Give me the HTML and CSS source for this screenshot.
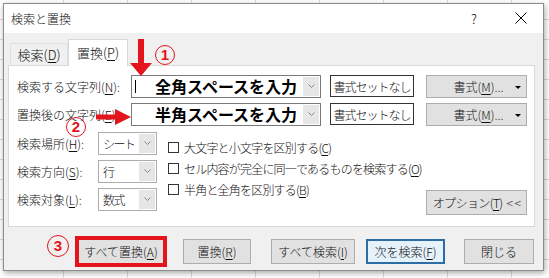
FILE: index.html
```html
<!DOCTYPE html>
<html lang="ja">
<head>
    <meta charset="UTF-8">
    <title>検索と置換</title>
    <link rel="stylesheet" href="styles.css">
</head>
<body>
    <div class="dialog">
        <!-- Title bar -->
        <div class="titlebar">
            <span class="title">検索と置換</span>
            <span class="help">?</span>
            <span class="close">
                <svg width="12" height="12" viewBox="0 0 12 12"><path d="M0.5 0.5L11.5 11.5M11.5 0.5L0.5 11.5" stroke="#000" stroke-width="1"/></svg>
            </span>
        </div>

        <!-- Tabs -->
        <div class="tabs">
            <div class="tab">検索(<u>D</u>)</div>
            <div class="tab active">置換(<u>P</u>)</div>
        </div>

        <div class="panel">
            <div class="text-row">
                <label class="row-label">検索する文字列(<u>N</u>):</label>
                <div class="combo">
                    <span class="caret"></span>
                    <span class="combo-value">全角スペースを入力</span>
                    <span class="combo-drop"><svg width="7" height="4" viewBox="0 0 7 4"><path d="M0.5 0.5L3.5 3.5L6.5 0.5" stroke="#888" fill="none"/></svg></span>
                </div>
                <div class="format-none">書式セットなし</div>
                <div class="btn format-btn">書式(<u>M</u>)... <span class="tri"></span></div>
            </div>
            <div class="text-row">
                <label class="row-label">置換後の文字列(<u>E</u>):</label>
                <div class="combo">
                    <span class="combo-value">半角スペースを入力</span>
                    <span class="combo-drop"><svg width="7" height="4" viewBox="0 0 7 4"><path d="M0.5 0.5L3.5 3.5L6.5 0.5" stroke="#888" fill="none"/></svg></span>
                </div>
                <div class="format-none">書式セットなし</div>
                <div class="btn format-btn">書式(<u>M</u>)... <span class="tri"></span></div>
            </div>

            <div class="options">
                <div class="selects">
                    <div class="select-row">
                        <label class="sel-label">検索場所(<u>H</u>):</label>
                        <div class="select"><span class="sel-value">シート</span><span class="select-drop"><svg width="7" height="4" viewBox="0 0 7 4"><path d="M0.5 0.5L3.5 3.5L6.5 0.5" stroke="#888" fill="none"/></svg></span></div>
                    </div>
                    <div class="select-row">
                        <label class="sel-label">検索方向(<u>S</u>):</label>
                        <div class="select"><span class="sel-value">行</span><span class="select-drop"><svg width="7" height="4" viewBox="0 0 7 4"><path d="M0.5 0.5L3.5 3.5L6.5 0.5" stroke="#888" fill="none"/></svg></span></div>
                    </div>
                    <div class="select-row">
                        <label class="sel-label">検索対象(<u>L</u>):</label>
                        <div class="select"><span class="sel-value">数式</span><span class="select-drop"><svg width="7" height="4" viewBox="0 0 7 4"><path d="M0.5 0.5L3.5 3.5L6.5 0.5" stroke="#888" fill="none"/></svg></span></div>
                    </div>
                </div>
                <div class="checks">
                    <div class="check"><span class="box"></span>大文字と小文字を区別する(<u>C</u>)</div>
                    <div class="check"><span class="box"></span>セル内容が完全に同一であるものを検索する(<u>O</u>)</div>
                    <div class="check"><span class="box"></span>半角と全角を区別する(<u>B</u>)</div>
                </div>
                <div class="btn options-btn">オプション(<u>T</u>)&nbsp; &lt; &lt;</div>
            </div>
        </div>

        <!-- Bottom buttons -->
        <div class="buttons">
            <div class="btn b-replace-all">すべて置換(<u>A</u>)</div>
            <div class="btn b-replace">置換(<u>R</u>)</div>
            <div class="btn b-find-all">すべて検索(<u>I</u>)</div>
            <div class="btn b-find-next">次を検索(<u>F</u>)</div>
            <div class="btn b-close">閉じる</div>
        </div>
    </div>

    <!-- Annotations -->
    <svg class="arrow arrow-down" width="24" height="38" viewBox="0 0 24 38">
        <path d="M9 0H15V24H23L12 37L1 24H9Z" fill="#e3141c"/>
    </svg>
    <svg class="arrow arrow-right" width="36" height="18" viewBox="0 0 36 18">
        <path d="M0 6.5H19V1L35 9L19 17V11.5H0Z" fill="#e3141c"/>
    </svg>
    <span class="num num-1">1</span>
    <span class="num num-2">2</span>
    <span class="num num-3">3</span>
</body>
</html>
```

FILE: styles.css
```css
body {
    margin: 0;
    width: 549px;
    height: 278px;
    overflow: hidden;
    position: relative;
    font-family: 'Noto Sans CJK JP', 'Noto Sans', sans-serif;
    font-size: 12px;
    font-weight: 300;
    white-space: nowrap;
    color: #111;
    background-color: #fff;
    background-image:
        repeating-linear-gradient(to right, transparent 0, transparent 63px, #dadada 63px, #dadada 64px),
        repeating-linear-gradient(to bottom, transparent 0, transparent 19px, #dadada 19px, #dadada 20px);
    padding: 3px 0 0 3px;
    box-sizing: border-box;
}

u {
    text-decoration-thickness: 1px;
    text-underline-offset: 2px;
}

.dialog {
    width: 541px;
    height: 268px;
    box-sizing: border-box;
    border: 1px solid #8c8c8c;
    background: #f0f0f0;
    box-shadow: 1px 2px 6px rgba(0, 0, 0, 0.35);
    display: flex;
    flex-direction: column;
}

.titlebar {
    height: 29px;
    background: #fff;
    display: flex;
    align-items: center;
    padding-left: 7px;
}

.title {
    flex: 1;
}

.help {
    width: 12px;
    text-align: center;
    font-size: 13px;
    margin-right: 35px;
}

.close {
    display: flex;
    margin-right: 16px;
}

.tabs {
    height: 32px;
    display: flex;
    align-items: flex-end;
    padding-left: 6px;
}

.tab {
    width: 58px;
    height: 22px;
    display: flex;
    align-items: center;
    justify-content: center;
    box-sizing: border-box;
    border: 1px solid #e0e0e0;
    border-bottom: none;
    font-size: 13px;
}

.tab.active {
    width: 60px;
    height: 27px;
    background: #fff;
    border-color: #d9d9d9;
    margin-bottom: -1px;
    position: relative;
}

.panel {
    margin: 0 8px 0 4px;
    height: 164px;
    box-sizing: border-box;
    border: 1px solid #d9d9d9;
    background: #fff;
    padding: 9px 0 0 8px;
}

.text-row {
    display: flex;
    align-items: center;
    height: 23px;
    margin-bottom: 5px;
}

.row-label {
    width: 114px;
}

.combo {
    width: 190px;
    height: 23px;
    box-sizing: border-box;
    border: 1px solid #7a7a7a;
    display: flex;
    align-items: center;
    position: relative;
}

.caret {
    position: absolute;
    left: 3px;
    top: 4px;
    width: 1px;
    height: 13px;
    background: #000;
}

.combo-value {
    flex: 1;
    padding-left: 23px;
    font-size: 16px;
    font-weight: bold;
    line-height: 21px;
    color: #000;
}

.combo-drop,
.select-drop {
    width: 16px;
    height: 19px;
    margin-right: 1px;
    background: #e6e6e6;
    display: flex;
    align-items: center;
    justify-content: center;
    flex-shrink: 0;
}

.format-none {
    width: 84px;
    height: 22px;
    box-sizing: border-box;
    border: 1px solid #333;
    margin-left: 9px;
    display: flex;
    align-items: center;
    justify-content: center;
    letter-spacing: -1px;
}

.btn {
    height: 23px;
    box-sizing: border-box;
    border: 1px solid #adadad;
    background: #e1e1e1;
    display: flex;
    align-items: center;
    justify-content: center;
}

.format-btn {
    width: 101px;
    margin-left: 12px;
    position: relative;
    padding-left: 4px;
}

.tri {
    position: absolute;
    right: 5px;
    top: 10px;
    border-left: 3px solid transparent;
    border-right: 3px solid transparent;
    border-top: 3px solid #000;
}

.options {
    display: flex;
    margin-top: 6px;
}

.selects {
    display: flex;
    flex-direction: column;
    gap: 5px;
}

.select-row {
    display: flex;
    align-items: center;
}

.sel-label {
    width: 81px;
}

.select {
    width: 59px;
    height: 23px;
    box-sizing: border-box;
    border: 1px solid #acacac;
    display: flex;
    align-items: center;
    padding-left: 4px;
}

.sel-value {
    flex: 1;
    letter-spacing: -1.5px;
    overflow: hidden;
}

.checks {
    flex: 1;
    min-width: 0;
    display: flex;
    flex-direction: column;
    padding: 5px 0 0 11px;
    letter-spacing: -0.8px;
}

.check {
    height: 21px;
    display: flex;
    align-items: center;
}

.box {
    width: 11px;
    height: 11px;
    box-sizing: border-box;
    border: 1px solid #333;
    background: #fff;
    margin-right: 5px;
}

.options-btn {
    width: 101px;
    height: 25px;
    align-self: flex-end;
    margin: 0 7px -4px 0;
    letter-spacing: -0.6px;
}

.buttons {
    display: flex;
    align-items: center;
    height: 37px;
    margin-top: 6px;
    padding-left: 74px;
}

.buttons .btn {
    height: 25px;
}

.b-replace-all {
    width: 86px;
    outline: 3px solid #e3141c;
    outline-offset: 0;
    border-color: #e3141c;
}

.b-replace {
    width: 68px;
    margin-left: 19px;
}

.b-find-all {
    width: 84px;
    margin-left: 20px;
}

.b-find-next {
    width: 79px;
    margin-left: 11px;
    border: 2px solid #2b6ea6;
    background: #e5f1fb;
}

.b-close {
    width: 70px;
    margin-left: 19px;
}

.arrow {
    position: absolute;
}

.arrow-down {
    left: 129px;
    top: 39px;
}

.arrow-right {
    left: 96px;
    top: 108px;
}

.num {
    position: absolute;
    width: 18px;
    height: 18px;
    border: 1.5px solid #e3141c;
    border-radius: 50%;
    color: #e3141c;
    font-family: 'Liberation Sans', sans-serif;
    font-weight: bold;
    font-size: 15px;
    line-height: 18px;
    text-align: center;
}

.num-1 {
    left: 155px;
    top: 45px;
}

.num-2 {
    left: 66px;
    top: 117px;
}

.num-3 {
    left: 47px;
    top: 235px;
    width: 20px;
    height: 20px;
    line-height: 20px;
}
```
